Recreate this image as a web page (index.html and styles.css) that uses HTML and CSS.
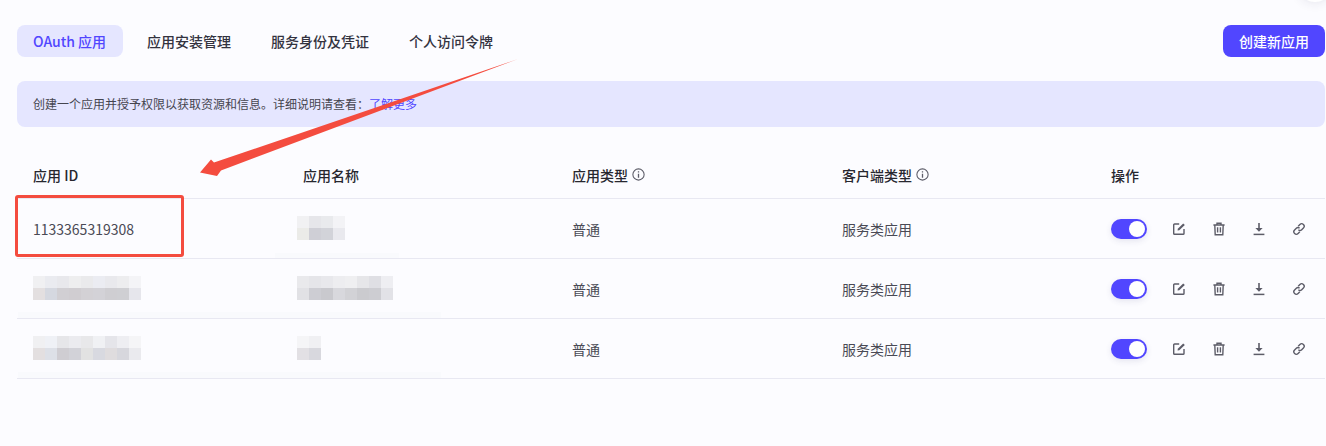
FILE: index.html
```html
<!DOCTYPE html>
<html lang="zh-CN">
<head>
  <meta charset="UTF-8" />
  <meta name="viewport" content="width=device-width, initial-scale=1.0" />
  <title>应用管理</title>
  <link rel="stylesheet" href="styles.css">
</head>
<body>
  <svg class="defs" width="0" height="0" aria-hidden="true">
    <symbol id="i-edit" viewBox="0 0 14 14">
      <path d="M7.2 2H2.6a.9.9 0 0 0-.9.9v8.5c0 .5.4.9.9.9h8.5c.5 0 .9-.4.9-.9V6.9" fill="none" stroke="currentColor" stroke-width="1.4"/>
      <path d="M5.6 8.5 5.8 6.8 11.2 1.4 12.8 2.9 7.3 8.3Z" fill="currentColor"/>
    </symbol>
    <symbol id="i-trash" viewBox="0 0 14 14">
      <path d="M1.4 3H12.6M5 2.8V1.3H9V2.8M2.8 3 3.2 12.7H10.8L11.2 3" fill="none" stroke="currentColor" stroke-width="1.4"/>
      <path d="M5.6 5.2V10.4M8.4 5.2V10.4" fill="none" stroke="currentColor" stroke-width="1.4"/>
    </symbol>
    <symbol id="i-down" viewBox="0 0 14 14">
      <path d="M7 1V8" fill="none" stroke="currentColor" stroke-width="1.6"/>
      <path d="M3.4 6H10.6L7 9.8Z" fill="currentColor"/>
      <path d="M1.6 12.4H12.4" fill="none" stroke="currentColor" stroke-width="1.5"/>
    </symbol>
    <symbol id="i-link" viewBox="0 0 14 14">
      <path d="M6.2 4.2 7.9 2.5a2.4 2.4 0 0 1 3.5 3.5L9.7 7.7a2.4 2.4 0 0 1-3.3.1" fill="none" stroke="currentColor" stroke-width="1.4"/>
      <path d="M7.8 9.8 6.1 11.5a2.4 2.4 0 0 1-3.5-3.5L4.3 6.3a2.4 2.4 0 0 1 3.3-.1" fill="none" stroke="currentColor" stroke-width="1.4"/>
    </symbol>
    <symbol id="i-info" viewBox="0 0 12 12">
      <circle cx="6" cy="6" r="5.2" fill="none" stroke="currentColor" stroke-width="1"/>
      <path d="M6 5.2V9M6 3V4.1" fill="none" stroke="currentColor" stroke-width="1.2"/>
    </symbol>
  </svg>

  <div class="page">
    <div class="corner-glow"></div>

    <div class="top-bar">
      <nav class="tabs">
        <a class="tab active">OAuth 应用</a>
        <a class="tab">应用安装管理</a>
        <a class="tab">服务身份及凭证</a>
        <a class="tab">个人访问令牌</a>
      </nav>
      <button class="create-btn">创建新应用</button>
    </div>

    <div class="notice">创建一个应用并授予权限以获取资源和信息。详细说明请查看：<a class="notice-link">了解更多</a></div>

    <div class="table">
      <div class="row head">
        <div class="cell">应用 ID</div>
        <div class="cell">应用名称</div>
        <div class="cell">应用类型<svg class="info"><use href="#i-info"/></svg></div>
        <div class="cell">客户端类型<svg class="info"><use href="#i-info"/></svg></div>
        <div class="cell">操作</div>
      </div>

      <div class="row">
        <div class="cell">1133365319308</div>
        <div class="cell">
          <svg class="mosaic name" width="48" height="24" shape-rendering="crispEdges">
            <rect x="0" width="12" height="12" fill="#f1f1f3"/><rect x="12" width="12" height="12" fill="#e6e6ea"/><rect x="24" width="12" height="12" fill="#e9eaed"/><rect x="36" width="12" height="12" fill="#f3f3f6"/>
            <rect x="0" y="12" width="12" height="12" fill="#ebebe8"/><rect x="12" y="12" width="12" height="12" fill="#cfcfd6"/><rect x="24" y="12" width="12" height="12" fill="#d2d3d9"/><rect x="36" y="12" width="12" height="12" fill="#e9e9ee"/>
          </svg>
        </div>
        <div class="cell">普通</div>
        <div class="cell">服务类应用</div>
        <div class="cell actions">
          <span class="switch"></span>
          <svg class="act"><use href="#i-edit"/></svg>
          <svg class="act"><use href="#i-trash"/></svg>
          <svg class="act"><use href="#i-down"/></svg>
          <svg class="act"><use href="#i-link"/></svg>
        </div>
      </div>

      <div class="row">
        <div class="cell">
          <svg class="mosaic" width="108" height="24" shape-rendering="crispEdges">
            <rect x="0" width="12" height="12" fill="#f0f0f2"/><rect x="12" width="12" height="12" fill="#eaebf0"/><rect x="24" width="12" height="12" fill="#e8e8ec"/><rect x="36" width="12" height="12" fill="#eeeeef"/><rect x="48" width="12" height="12" fill="#eaeaec"/><rect x="60" width="12" height="12" fill="#ebecf2"/><rect x="72" width="12" height="12" fill="#e9e9ed"/><rect x="84" width="12" height="12" fill="#ededef"/><rect x="96" width="12" height="12" fill="#f4f4f7"/>
            <rect x="0" y="12" width="12" height="12" fill="#e3dfe0"/><rect x="12" y="12" width="12" height="12" fill="#d5d8e0"/><rect x="24" y="12" width="12" height="12" fill="#d1cfd3"/><rect x="36" y="12" width="12" height="12" fill="#d0cdd1"/><rect x="48" y="12" width="12" height="12" fill="#d3d1d5"/><rect x="60" y="12" width="12" height="12" fill="#d3d2d7"/><rect x="72" y="12" width="12" height="12" fill="#cfced2"/><rect x="84" y="12" width="12" height="12" fill="#cfcfd3"/><rect x="96" y="12" width="12" height="12" fill="#e6e6ec"/>
          </svg>
        </div>
        <div class="cell">
          <svg class="mosaic name" width="96" height="24" shape-rendering="crispEdges">
            <rect x="0" width="12" height="12" fill="#e9e9ec"/><rect x="12" width="12" height="12" fill="#e5e5e9"/><rect x="24" width="12" height="12" fill="#e8e8ec"/><rect x="36" width="12" height="12" fill="#ededf0"/><rect x="48" width="12" height="12" fill="#efeff1"/><rect x="60" width="12" height="12" fill="#e6e6e9"/><rect x="72" width="12" height="12" fill="#dfdfe4"/><rect x="84" width="12" height="12" fill="#eeeef2"/>
            <rect x="0" y="12" width="12" height="12" fill="#e1e1e5"/><rect x="12" y="12" width="12" height="12" fill="#cdcdd3"/><rect x="24" y="12" width="12" height="12" fill="#c9c9ce"/><rect x="36" y="12" width="12" height="12" fill="#d8d8dd"/><rect x="48" y="12" width="12" height="12" fill="#d2d2d6"/><rect x="60" y="12" width="12" height="12" fill="#cbcbcf"/><rect x="72" y="12" width="12" height="12" fill="#cdcdd2"/><rect x="84" y="12" width="12" height="12" fill="#e2e2e7"/>
          </svg>
        </div>
        <div class="cell">普通</div>
        <div class="cell">服务类应用</div>
        <div class="cell actions">
          <span class="switch"></span>
          <svg class="act"><use href="#i-edit"/></svg>
          <svg class="act"><use href="#i-trash"/></svg>
          <svg class="act"><use href="#i-down"/></svg>
          <svg class="act"><use href="#i-link"/></svg>
        </div>
      </div>

      <div class="row">
        <div class="cell">
          <svg class="mosaic" width="108" height="24" shape-rendering="crispEdges">
            <rect x="0" width="12" height="12" fill="#f0f0f2"/><rect x="12" width="12" height="12" fill="#eff1f6"/><rect x="24" width="12" height="12" fill="#e6e6e9"/><rect x="36" width="12" height="12" fill="#ebebef"/><rect x="48" width="12" height="12" fill="#e8e8ea"/><rect x="60" width="12" height="12" fill="#f0f1f4"/><rect x="72" width="12" height="12" fill="#e5e5ea"/><rect x="84" width="12" height="12" fill="#eeeef2"/><rect x="96" width="12" height="12" fill="#f5f5f7"/>
            <rect x="0" y="12" width="12" height="12" fill="#e3dfe0"/><rect x="12" y="12" width="12" height="12" fill="#dde0e7"/><rect x="24" y="12" width="12" height="12" fill="#cfcdd2"/><rect x="36" y="12" width="12" height="12" fill="#d2d2d8"/><rect x="48" y="12" width="12" height="12" fill="#e2e2e2"/><rect x="60" y="12" width="12" height="12" fill="#d8d9e0"/><rect x="72" y="12" width="12" height="12" fill="#dfdcde"/><rect x="84" y="12" width="12" height="12" fill="#d7d7dd"/><rect x="96" y="12" width="12" height="12" fill="#eaeaee"/>
          </svg>
        </div>
        <div class="cell">
          <svg class="mosaic name" width="24" height="24" shape-rendering="crispEdges">
            <rect x="0" width="12" height="12" fill="#f5f5f7"/><rect x="12" width="12" height="12" fill="#f0f0f3"/>
            <rect x="0" y="12" width="12" height="12" fill="#e2e0e4"/><rect x="12" y="12" width="12" height="12" fill="#d8d8de"/>
          </svg>
        </div>
        <div class="cell">普通</div>
        <div class="cell">服务类应用</div>
        <div class="cell actions">
          <span class="switch"></span>
          <svg class="act"><use href="#i-edit"/></svg>
          <svg class="act"><use href="#i-trash"/></svg>
          <svg class="act"><use href="#i-down"/></svg>
          <svg class="act"><use href="#i-link"/></svg>
        </div>
      </div>
    </div>

    <!-- annotations drawn over the screenshot -->
    <div class="smudge s1"></div>
    <div class="smudge s2"></div>
    <div class="smudge s3"></div>
    <div class="red-box"></div>
    <svg class="arrow" width="1326" height="446">
      <polygon points="518,59 221,170.5 217,176 200,172.5 211,159.5 214,162.5" fill="#f44c3f"/>
    </svg>
  </div>
</body>
</html>
```

FILE: styles.css
```css
* {
  box-sizing: border-box;
  margin: 0;
  padding: 0;
}

body {
  font-family: "Noto Sans CJK SC", "Noto Sans", sans-serif;
  background: #fcfcff;
  color: #3d3d4a;
  overflow: hidden;
}

.defs {
  position: absolute;
}

.page {
  position: relative;
  width: 1326px;
  height: 446px;
  padding: 25px 1px 0 17px;
  overflow: hidden;
}

.corner-glow {
  position: absolute;
  top: -22px;
  right: -4px;
  width: 30px;
  height: 24px;
  border-radius: 50%;
  background: #ffffff;
  box-shadow: 0 0 12px rgba(40, 40, 80, 0.12);
}

.top-bar {
  display: flex;
  justify-content: space-between;
  align-items: center;
  height: 32px;
}

.tabs {
  display: flex;
  gap: 8px;
}

.tab {
  height: 32px;
  line-height: 32px;
  padding: 0 16px;
  border-radius: 8px;
  font-size: 14px;
  font-weight: 500;
  color: #33333f;
}

.tab.active {
  padding-right: 17px;
  background: #e5e6ff;
  color: #5146ff;
}

.create-btn {
  width: 102px;
  height: 32px;
  border: none;
  border-radius: 8px;
  background: #5146ff;
  color: #ffffff;
  font-family: inherit;
  font-size: 14px;
  font-weight: 500;
}

.notice {
  height: 46px;
  line-height: 46px;
  margin-top: 24px;
  padding-left: 16px;
  border-radius: 8px;
  background: #e5e6ff;
  font-size: 12px;
  color: #45454f;
}

.notice-link {
  color: #5146ff;
}

.table {
  margin-top: 12px;
}

.row {
  display: grid;
  grid-template-columns: 270px 269px 270px 269px 1fr;
  align-items: center;
  height: 60px;
  border-bottom: 1px solid #e8e8f2;
  font-size: 14px;
  color: #4a4a55;
}

.row.head {
  padding-top: 12px;
  font-weight: 500;
  color: #27272f;
}

.cell {
  display: flex;
  align-items: center;
  padding-left: 16px;
}

.info {
  width: 13px;
  height: 13px;
  margin-left: 4px;
  color: #5c5c68;
}

.mosaic {
  display: block;
  margin-top: -1px;
}

.mosaic.name {
  margin-left: -6px;
}

.actions {
  gap: 24px;
}

.switch {
  position: relative;
  flex: none;
  width: 36px;
  height: 20px;
  margin-top: 1px;
  border-radius: 10px;
  background: #5146ff;
  box-shadow: 0 2px 6px rgba(60, 60, 120, 0.12);
}

.switch::after {
  content: "";
  position: absolute;
  top: 2px;
  right: 2px;
  width: 16px;
  height: 16px;
  border-radius: 50%;
  background: #ffffff;
}

.act {
  flex: none;
  width: 16px;
  height: 14px;
  margin-top: 1px;
  color: #5c5c68;
}

.smudge {
  position: absolute;
  background: #f9fafd;
}

.s1 {
  left: 275px;
  top: 253px;
  width: 124px;
  height: 5px;
}

.s2 {
  left: 18px;
  top: 312px;
  width: 423px;
  height: 6px;
}

.s3 {
  left: 18px;
  top: 372px;
  width: 423px;
  height: 6px;
}

.red-box {
  position: absolute;
  left: 15px;
  top: 195px;
  width: 169px;
  height: 62px;
  border: 3px solid #f44c3f;
  border-radius: 3px;
}

.arrow {
  position: absolute;
  left: 0;
  top: 0;
  pointer-events: none;
}
```
